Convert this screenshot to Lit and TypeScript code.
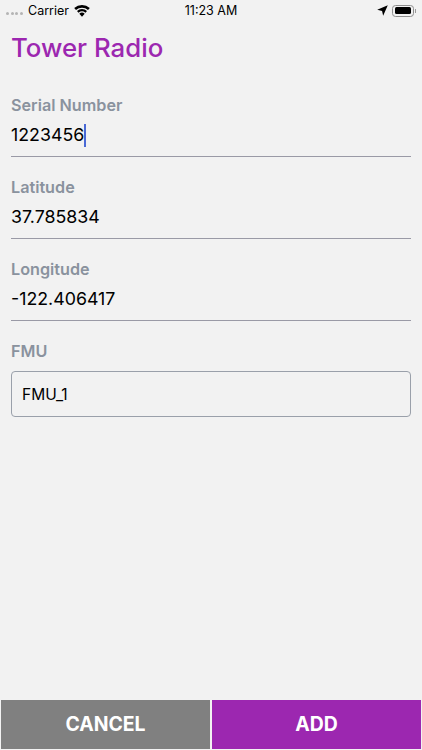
import { LitElement, html, css, svg } from "lit";
import { customElement } from "lit/decorators.js";

@customElement("app-root")
export class AppRoot extends LitElement {
  static styles = css`
    :host {
      display: flex;
      flex-direction: column;
      width: 422px;
      height: 750px;
      background: #f2f2f2;
      font-family: Inter, "Liberation Sans", Arial, sans-serif;
      color: #000;
      overflow: hidden;
    }
    .status {
      height: 21px;
      padding: 0 6px 0 6px;
      display: grid;
      grid-template-columns: 1fr auto 1fr;
      align-items: center;
      font-size: 12.5px;
      line-height: 21px;
    }
    .left { display: flex; align-items: center; }
    .dots { display: flex; gap: 1.5px; margin-right: 5.5px; margin-top: 6px; }
    .dots i { width: 3px; height: 3px; border-radius: 50%; background: #b4b4b4; }
    .wifi { margin-left: 5px; }
    .right { display: flex; justify-content: flex-end; align-items: center; gap: 4px; }
    .battery { display: flex; align-items: center; }
    .shell { width: 22px; height: 12px; border: 1px solid #8e8e8e; border-radius: 3.5px; padding: 1.5px; box-sizing: border-box; display: flex; }
    .fill { width: 16px; background: #000; border-radius: 1.5px; }
    .nub { width: 1px; height: 4px; background: #9a9a9a; margin-left: 1px; }
    main { flex: 1; padding: 0 11px; display: flex; flex-direction: column; }
    h1 {
      margin: 7px 0 0;
      font-size: 25.8px;
      line-height: 40px;
      font-weight: 500;
      color: #9c27b0;
    }
    .field { display: flex; flex-direction: column; height: 82px; }
    .first { margin-top: 27px; }
    .label {
      font-size: 16.2px;
      line-height: 20px;
      font-weight: 600;
      color: #8a929e;
    }
    .value {
      font-size: 17.8px;
      line-height: 24px;
      margin-top: 8px;
      height: 24px;
      display: flex;
      align-items: center;
    }
    .rule { height: 1px; background: #9a9aa6; margin-top: 9px; }
    .caret { width: 2px; height: 23px; background: #4a69d6; }
    .select {
      margin-top: 10px;
      height: 46px;
      box-sizing: border-box;
      border: 1px solid #9aa0aa;
      border-radius: 4px;
      padding: 0 10px;
      display: flex;
      align-items: center;
      font-size: 15.5px;
    }
    footer {
      display: grid;
      grid-template-columns: 209px 209px;
      gap: 2px;
      padding: 0 1px 1px;
    }
    button {
      height: 49px;
      border: 0;
      padding: 0 0 1px;
      color: #fff;
      font: 700 19.4px Inter, "Liberation Sans", Arial, sans-serif;
    }
    .cancel { background: #808080; }
    .add { background: #9c27b0; }
  `;

  field(label: string, value: string, caret = false, cls = "") {
    return html`<div class="field ${cls}">
      <div class="label">${label}</div>
      <div class="value">${value}${caret ? html`<span class="caret"></span>` : ""}</div>
      <div class="rule"></div>
    </div>`;
  }

  render() {
    return html`
      <div class="status">
        <div class="left">
          <span class="dots"><i></i><i></i><i></i><i></i></span>
          <span>Carrier</span>
          <svg class="wifi" width="16" height="12" viewBox="0 0 16 12">
            ${svg`<path d="M8 11.8 5.3 8.7a4 4 0 0 1 5.4 0Z M4.5 7.8 3 6a7.6 7.6 0 0 1 10 0l-1.5 1.8a5.4 5.4 0 0 0-7 0Z M2 5 .2 3.1a11.6 11.6 0 0 1 15.6 0L14 5a9.1 9.1 0 0 0-12 0Z" fill="#000"/>`}
          </svg>
        </div>
        <div>11:23 AM</div>
        <div class="right">
          <svg width="11" height="11" viewBox="0 0 10 10">
            ${svg`<path d="M9.8.2 5.6 9.8 4.6 5.4.2 4.4Z" fill="#000"/>`}
          </svg>
          <div class="battery"><div class="shell"><div class="fill"></div></div><div class="nub"></div></div>
        </div>
      </div>
      <main>
        <h1>Tower Radio</h1>
        ${this.field("Serial Number", "1223456", true, "first")}
        ${this.field("Latitude", "37.785834")}
        ${this.field("Longitude", "-122.406417")}
        <div class="label">FMU</div>
        <div class="select">FMU_1</div>
      </main>
      <footer>
        <button class="cancel">CANCEL</button>
        <button class="add">ADD</button>
      </footer>
    `;
  }
}
